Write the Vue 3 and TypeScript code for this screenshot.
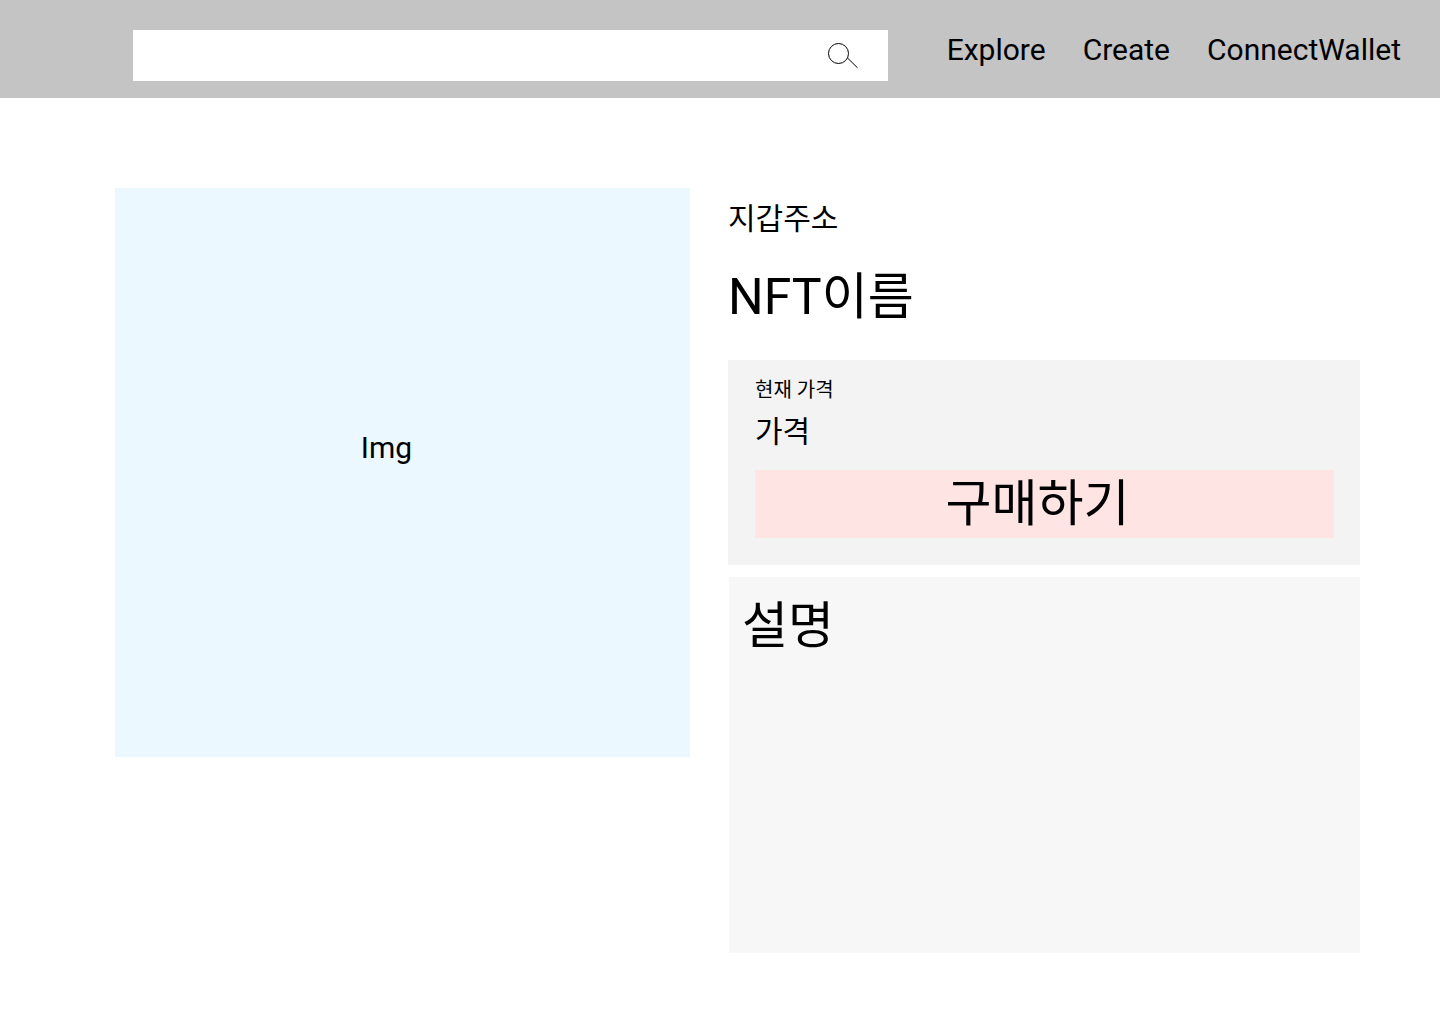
<script setup lang="ts">
import { ref } from 'vue'

interface NavItem {
  label: string
  href: string
}

const query = ref('')

const navItems: NavItem[] = [
  { label: 'Explore', href: '#explore' },
  { label: 'Create', href: '#create' },
  { label: 'ConnectWallet', href: '#wallet' },
]
</script>

<template>
  <div class="page">
    <header class="header">
      <form class="search" role="search" @submit.prevent>
        <input v-model="query" class="search-input" type="search" aria-label="Search" />
        <button class="search-button" type="submit" aria-label="Search">
          <svg width="32" height="27" viewBox="0 0 32 27" fill="none" stroke="#000" aria-hidden="true">
            <circle cx="11.5" cy="11.5" r="10" />
            <path d="M20.3 15.8L30.5 25.8" />
          </svg>
        </button>
      </form>
      <nav class="nav">
        <a v-for="item in navItems" :key="item.label" :href="item.href">{{ item.label }}</a>
      </nav>
    </header>

    <main class="content">
      <div class="artwork">Img</div>

      <section class="details">
        <p class="owner">지갑주소</p>
        <h1 class="title">NFT이름</h1>

        <div class="price-card">
          <p class="price-label">현재 가격</p>
          <p class="price">가격</p>
          <button class="buy" type="button">구매하기</button>
        </div>

        <section class="description">
          <h2 class="description-title">설명</h2>
        </section>
      </section>
    </main>
  </div>
</template>

<style>
body {
  margin: 0;
  background: #fff;
}
</style>

<style scoped>
.page {
  font-family: Roboto, 'Noto Sans CJK KR', sans-serif;
  font-size: 30px;
  line-height: 35px;
  color: #000;
}

h1,
h2,
p {
  margin: 0;
  font-weight: 400;
}

.header {
  display: flex;
  align-items: flex-start;
  gap: 59px;
  padding: 30px 39px 17px 133px;
  background: #c4c4c4;
}

.search {
  display: flex;
  flex: 1;
  min-width: 0;
  height: 51px;
  background: #fff;
}

.search-input {
  flex: 1;
  min-width: 0;
  padding: 0 16px;
  border: 0;
  outline: 0;
  background: transparent;
  font: inherit;
  font-size: 20px;
}

.search-button {
  display: flex;
  align-items: center;
  padding: 0 29px 0 16px;
  border: 0;
  background: transparent;
  cursor: pointer;
}

.nav {
  display: flex;
  gap: 37px;
  padding-top: 2px;
}

.nav a {
  color: inherit;
  text-decoration: none;
}

.content {
  display: grid;
  grid-template-columns: 575fr 632fr;
  align-items: start;
  gap: 38px;
  padding: 90px 80px 71px 115px;
}

.artwork {
  display: flex;
  align-items: center;
  justify-content: center;
  box-sizing: border-box;
  aspect-ratio: 575 / 569;
  padding: 0 32px 50px 0;
  background: #ebf8ff;
}

.details {
  padding-top: 13px;
}

.title {
  margin: 32px 0 33px;
  font-size: 50px;
  line-height: 59px;
}

.price-card {
  padding: 19px 26px 27px 27px;
  background: #f3f3f3;
}

.price-label {
  font-size: 20px;
  line-height: 23px;
}

.price {
  margin: 12px 0 21px;
}

.buy {
  display: block;
  width: 100%;
  height: 68px;
  padding: 0 14px 0 0;
  border: 0;
  background: #ffe4e4;
  color: inherit;
  font: inherit;
  font-size: 50px;
  line-height: 59px;
  cursor: pointer;
}

.description {
  box-sizing: border-box;
  min-height: 376px;
  margin: 12px 0 0 1px;
  padding: 20px 13px;
  background: #f7f7f7;
}

.description-title {
  font-size: 50px;
  line-height: 59px;
}
</style>
